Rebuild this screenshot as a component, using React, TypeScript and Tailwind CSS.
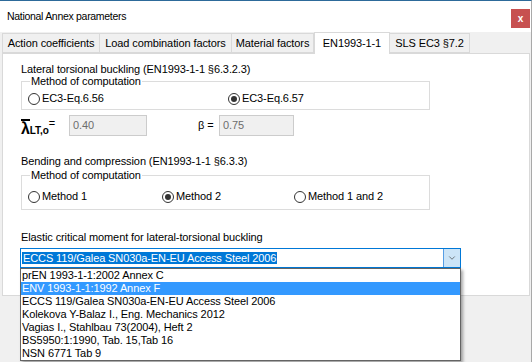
import { ChevronDown } from "lucide-react";

const tabs = [
  { label: "Action coefficients", w: "w-[98px]" },
  { label: "Load combination factors", w: "w-[132px]" },
  { label: "Material factors", w: "w-[82px]" },
  { label: "EN1993-1-1", w: "w-[76px]" },
  { label: "SLS EC3 §7.2", w: "w-[80px]" },
];

const options = [
  "prEN 1993-1-1:2002 Annex C",
  "ENV 1993-1-1:1992 Annex F",
  "ECCS 119/Galea SN030a-EN-EU Access Steel 2006",
  "Kolekova Y-Balaz I., Eng. Mechanics 2012",
  "Vagias I., Stahlbau 73(2004), Heft 2",
  "BS5950:1:1990, Tab. 15,Tab 16",
  "NSN 6771 Tab 9",
];

function Radio({ checked, label }: { checked?: boolean; label: string }) {
  return (
    <div className="flex items-center gap-[2px] h-[13px]">
      <span className="w-[12px] h-[12px] rounded-full border border-[#333333] bg-white flex items-center justify-center">
        {checked && <span className="w-[6px] h-[6px] rounded-full bg-[#333333]" />}
      </span>
      <span>{label}</span>
    </div>
  );
}

function ReadOnlyBox({ value, width }: { value: string; width: string }) {
  return (
    <div className={`${width} h-[21px] border border-[#cccccc] bg-[#f0f0f0] text-[#6d6d6d] px-[3px] flex items-center`}>
      {value}
    </div>
  );
}

export default function App() {
  return (
    <div className="w-[532px] h-[362px] overflow-hidden relative bg-[#f0f0f0] border-t border-[#2d6a9a] border-r border-r-[#a9a9a9] font-['Liberation_Sans',Arial,sans-serif] text-[11px] leading-[13px] tracking-[-0.1px] text-black">
      {/* Title bar */}
      <div className="h-[31px] bg-white flex items-center justify-between pl-[7px] pr-[1px]">
        <span className="text-[10.5px] tracking-[-0.3px]">National Annex parameters</span>
        <div className="w-[19px] h-[19px] bg-[#c75050] text-white flex items-center justify-center text-[10px] font-bold mt-[4px]">
          x
        </div>
      </div>

      {/* Tabs */}
      <div className="flex items-end h-[21px] pl-[2px]">
        {tabs.map((t, i) =>
          i === 3 ? (
            <div
              key={t.label}
              className={`${t.w} h-[22px] -mb-[1px] bg-white border border-b-0 border-[#d9d9d9] flex items-center justify-center z-10 relative`}
            >
              {t.label}
            </div>
          ) : (
            <div
              key={t.label}
              className={`${t.w} h-[20px] bg-[#f0f0f0] border border-[#d9d9d9] ${i > 0 ? "border-l-0" : ""} flex items-center justify-center`}
            >
              {t.label}
            </div>
          )
        )}
      </div>

      {/* Panel */}
      <div className="ml-[2px] w-[528px] h-[243px] bg-white border border-[#d9d9d9] pl-[18px]">
        <div className="mt-[9px]">Lateral torsional buckling (EN1993-1-1 §6.3.2.3)</div>
        <fieldset className="-mt-[1px] w-[409px] border border-[#dcdcdc] pl-[6px] pt-[4px] pb-[4px]">
          <legend className="ml-[2px] px-[1px]">Method of computation</legend>
          <div className="flex">
            <div className="w-[200px]">
              <Radio label="EC3-Eq.6.56" />
            </div>
            <Radio checked label="EC3-Eq.6.57" />
          </div>
        </fieldset>

        <div className="mt-[5px] flex items-center h-[21px]">
          <div className="w-[48px] flex items-start font-bold">
            <span className="text-[16px] leading-[15px] mt-[3px] border-t-2 border-black">λ</span>
            <span className="text-[10px] leading-[10px] mt-[10px]">LT,o</span>
            <span className="text-[11px] leading-[11px] font-normal mt-[2px]">=</span>
          </div>
          <ReadOnlyBox value="0.40" width="w-[78px]" />
          <span className="ml-[51px] w-[21px]">β =</span>
          <ReadOnlyBox value="0.75" width="w-[75px]" />
        </div>

        <div className="mt-[19px]">Bending and compression (EN1993-1-1 §6.3.3)</div>
        <fieldset className="mt-[1px] w-[409px] border border-[#dcdcdc] pl-[6px] pt-[8px] pb-[6px]">
          <legend className="ml-[2px] px-[1px]">Method of computation</legend>
          <div className="flex">
            <div className="w-[134px]">
              <Radio label="Method 1" />
            </div>
            <div className="w-[132px]">
              <Radio checked label="Method 2" />
            </div>
            <Radio label="Method 1 and 2" />
          </div>
        </fieldset>

        <div className="mt-[21px]">Elastic critical moment for lateral-torsional buckling</div>
        <div className="mt-[4px] w-[441px] h-[20px] border border-[#0078d7] flex items-center -ml-[1px] relative">
          <div className="flex-1 pl-[1px]">
            <span className="bg-[#0078d7] text-white px-[1px]">ECCS 119/Galea SN030a-EN-EU Access Steel 2006</span>
          </div>
          <div className="w-[17px] h-[18px] bg-[#cce4f7] border-l border-[#569de5] flex items-center justify-center text-[#333]">
            <ChevronDown size={10} strokeWidth={1.5} />
          </div>

          {/* Open dropdown list */}
          <div className="absolute left-[-1px] top-[19px] w-[441px] bg-white border border-[#646464] shadow-[2px_2px_3px_rgba(0,0,0,0.35)] z-20">
            {options.map((o, i) => (
              <div
                key={o}
                className={`h-[13px] leading-[13px] pl-[1px] ${i === 1 ? "bg-[#3399ff] text-white" : ""}`}
              >
                {o}
              </div>
            ))}
          </div>
        </div>
      </div>
    </div>
  );
}
